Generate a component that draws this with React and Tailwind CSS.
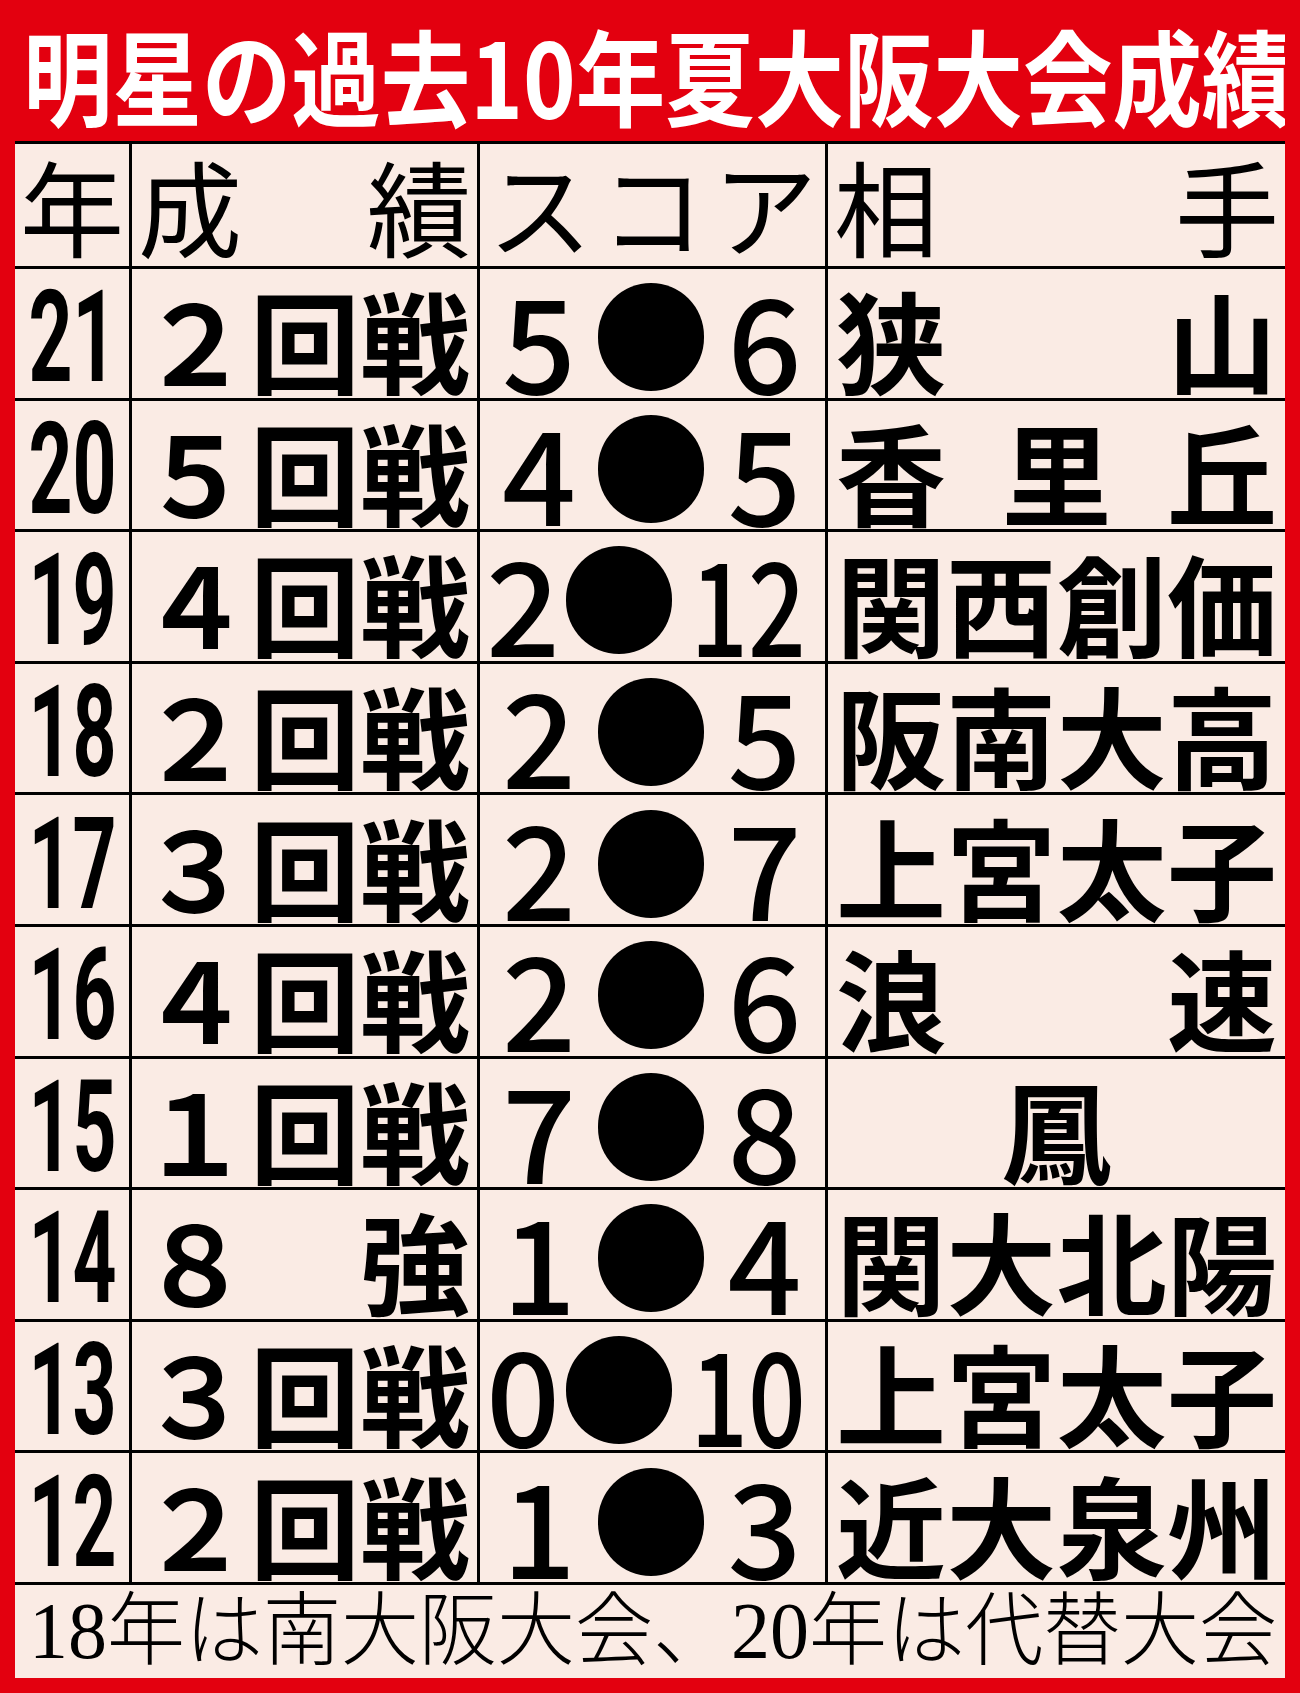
import React from 'react';

const rows = [
  { year: '21', result: '２回戦', a: '5', b: '6', opp: '狭山' },
  { year: '20', result: '５回戦', a: '4', b: '5', opp: '香里丘' },
  { year: '19', result: '４回戦', a: '2', b: '12', opp: '関西創価' },
  { year: '18', result: '２回戦', a: '2', b: '5', opp: '阪南大高' },
  { year: '17', result: '３回戦', a: '2', b: '7', opp: '上宮太子' },
  { year: '16', result: '４回戦', a: '2', b: '6', opp: '浪速' },
  { year: '15', result: '１回戦', a: '7', b: '8', opp: '鳳' },
  { year: '14', result: '８強', a: '1', b: '4', opp: '関大北陽' },
  { year: '13', result: '３回戦', a: '0', b: '10', opp: '上宮太子' },
  { year: '12', result: '２回戦', a: '1', b: '3', opp: '近大泉州' },
];

// spread the characters over the cell, a single one sits in the middle
function Spread({ text, className }) {
  const chars = [...text];
  return (
    <div className={`flex h-full items-center pt-[10px] ${chars.length === 1 ? 'justify-center' : 'justify-between'} ${className}`}>
      {chars.map((c, i) => (
        <span key={i}>{c}</span>
      ))}
    </div>
  );
}

function Score({ a, b }) {
  const wide = b.length > 1;
  return (
    <div className="flex h-full items-center pt-[8px] font-['Noto_Sans_CJK_JP',sans-serif] text-[130px] font-medium leading-none">
      <div className={`flex shrink-0 justify-center ${wide ? 'w-[86px]' : 'w-[118px]'}`}>
        <span>{a}</span>
      </div>
      <div className="h-[108px] w-[106px] shrink-0 rounded-full bg-black" />
      <div className="flex flex-1 justify-center">
        {wide ? (
          <span className="inline-block scale-x-[0.78]">{b}</span>
        ) : (
          <span>{b}</span>
        )}
      </div>
    </div>
  );
}

function App() {
  return (
    <div className="flex h-[1693px] w-[1300px] flex-col overflow-hidden bg-[#e3000f] px-[15px] pb-[15px]">
      <div className="flex h-[141px] shrink-0 items-center overflow-hidden pt-[6px]">
        <h1 className="ml-[8px] inline-block origin-left scale-x-[0.86] whitespace-nowrap font-['Noto_Sans_CJK_JP',sans-serif] text-[104px] font-bold leading-none text-white">
          明星の過去10年夏大阪大会成績
        </h1>
      </div>

      <div className="grid h-[1537px] shrink-0 grid-cols-[114px_345px_345px_457px] grid-rows-[122px_repeat(10,128.6px)_93px] gap-[3px] border-t-[3px] border-black bg-black text-black">
        {/* header */}
        <div className="flex items-center justify-center overflow-hidden bg-[#faebe4] font-['Noto_Sans_CJK_JP',sans-serif] text-[104px] leading-none">
          年
        </div>
        <div className="overflow-hidden bg-[#faebe4] px-[6px] font-['Noto_Sans_CJK_JP',sans-serif] text-[104px] leading-none">
          <div className="flex h-full items-center justify-between">
            <span>成</span>
            <span>績</span>
          </div>
        </div>
        <div className="overflow-hidden bg-[#faebe4] px-[8px] font-['Noto_Sans_CJK_JP',sans-serif] text-[104px] leading-none">
          <div className="flex h-full items-center justify-between">
            <span>ス</span>
            <span>コ</span>
            <span>ア</span>
          </div>
        </div>
        <div className="overflow-hidden bg-[#faebe4] px-[6px] font-['Noto_Sans_CJK_JP',sans-serif] text-[104px] leading-none">
          <div className="flex h-full items-center justify-between">
            <span>相</span>
            <span>手</span>
          </div>
        </div>

        {rows.map((r) => (
          <React.Fragment key={r.year}>
            <div className="flex items-center justify-center overflow-hidden bg-[#faebe4] pt-[8px]">
              <span className="inline-block scale-x-[0.6] font-['Roboto','Liberation_Sans',sans-serif] text-[128px] font-bold leading-none">
                {r.year}
              </span>
            </div>
            <div className="overflow-hidden bg-[#faebe4] pl-[8px] pr-[7px]">
              <Spread
                text={r.result}
                className="font-['Noto_Sans_CJK_JP',sans-serif] text-[110px] font-bold leading-none"
              />
            </div>
            <div className="overflow-hidden bg-[#faebe4]">
              <Score a={r.a} b={r.b} />
            </div>
            <div className="overflow-hidden bg-[#faebe4] px-[8px]">
              <Spread
                text={r.opp}
                className="font-['Noto_Sans_CJK_JP',sans-serif] text-[110px] font-bold leading-none"
              />
            </div>
          </React.Fragment>
        ))}

        {/* footnote */}
        <div className="col-span-4 flex items-center overflow-hidden bg-[#faebe4] pl-[14px]">
          <span className="inline-block origin-left scale-x-[0.975] whitespace-nowrap font-['Liberation_Serif','Noto_Sans_CJK_JP',serif] text-[80px] font-light leading-none">
            18年は南大阪大会、20年は代替大会
          </span>
        </div>
      </div>
    </div>
  );
}

export default App;
